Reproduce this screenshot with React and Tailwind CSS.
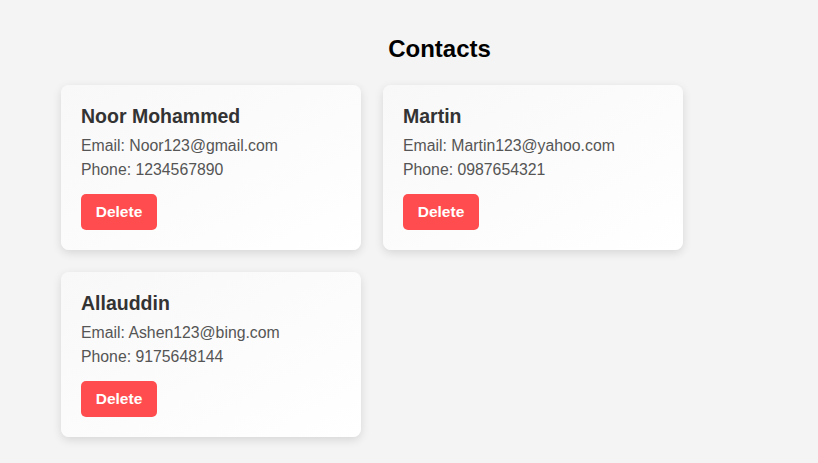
import React from 'react';

const contacts = [
  { name: 'Noor Mohammed', email: 'Noor123@gmail.com', phone: '1234567890' },
  { name: 'Martin', email: 'Martin123@yahoo.com', phone: '0987654321' },
  { name: 'Allauddin', email: 'Ashen123@bing.com', phone: '9175648144' },
];

const ContactCard = ({ contact }) => (
  <div className="w-[300px] h-[165px] rounded-lg bg-gradient-to-br from-[#f8f8f8] to-white p-5 shadow-[0_3px_10px_rgba(0,0,0,0.12)]">
    <h3 className="text-[19.5px] font-bold leading-[22px] text-[#333]">{contact.name}</h3>
    <p className="mt-[7px] text-[15.8px] leading-6 text-[#555]">Email: {contact.email}</p>
    <p className="text-[15.8px] leading-6 text-[#555]">Phone: {contact.phone}</p>
    <button className="mt-[12px] flex h-9 w-[76px] items-center justify-center rounded-[5px] bg-[#ff4d4f] text-[15.5px] font-bold text-white">
      Delete
    </button>
  </div>
);

export default function App() {
  return (
    <div className="min-h-[463px] bg-[#f4f4f4] pl-[61px] pt-[35px] font-['Liberation_Sans',Arial,sans-serif]">
      <h1 className="text-center text-[24px] font-bold leading-7 text-black">Contacts</h1>
      <div className="mt-[22px] flex flex-wrap gap-[22px]">
        {contacts.map((c, i) => (
          <ContactCard key={i} contact={c} />
        ))}
      </div>
    </div>
  );
}
